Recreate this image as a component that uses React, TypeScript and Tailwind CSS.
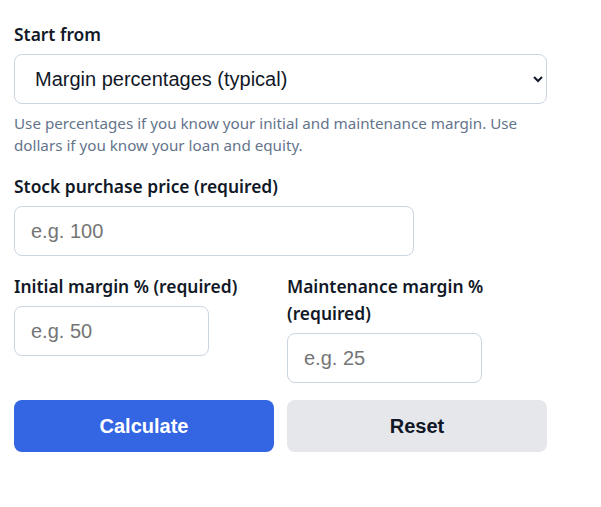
import { useState } from "react";

const labelClass =
  "mb-1.5 block text-[17.4px] font-semibold leading-[27px] text-[#111827]";

const inputClass =
  "h-[50px] rounded-lg border border-[#cbd5e1] bg-white px-4 font-['Liberation_Sans',Arial,sans-serif] text-[20px] text-[#111827] placeholder:text-[#757575] outline-none";

export default function App() {
  const [mode, setMode] = useState("percent");
  const [price, setPrice] = useState("");
  const [initial, setInitial] = useState("");
  const [maintenance, setMaintenance] = useState("");

  const reset = () => {
    setPrice("");
    setInitial("");
    setMaintenance("");
  };

  return (
    <div
      className="min-h-screen bg-white px-[14px] pt-[21px]"
      style={{ fontFamily: '"Noto Sans", "Open Sans", sans-serif' }}
    >
      <div className="w-[533px]">
        {/* START FROM */}
        <div className="mb-[17px]">
          <label className={labelClass}>Start from</label>
          <select
            value={mode}
            onChange={(e) => setMode(e.target.value)}
            className="h-[50px] w-full rounded-lg border border-[#cbd5e1] bg-white pl-4 pr-2 font-['Liberation_Sans',Arial,sans-serif] text-[20px] text-[#111827]"
          >
            <option value="percent">Margin percentages (typical)</option>
            <option value="dollars">Dollar amounts</option>
          </select>
          <p className="mt-2 text-[15.2px] leading-[22px] text-[#64748b]">
            Use percentages if you know your initial and maintenance margin. Use
            dollars if you know your loan and equity.
          </p>
        </div>

        {/* PRICE */}
        <div className="mb-[17px]">
          <label className={labelClass}>Stock purchase price (required)</label>
          <input
            value={price}
            onChange={(e) => setPrice(e.target.value)}
            placeholder="e.g. 100"
            className={`${inputClass} w-[400px]`}
          />
        </div>

        {/* MARGINS */}
        <div className="mb-[17px] grid grid-cols-2 gap-x-[13px]">
          <div>
            <label className={labelClass}>Initial margin % (required)</label>
            <input
              value={initial}
              onChange={(e) => setInitial(e.target.value)}
              placeholder="e.g. 50"
              className={`${inputClass} w-[195px]`}
            />
          </div>
          <div>
            <label className={labelClass}>
              Maintenance margin % (required)
            </label>
            <input
              value={maintenance}
              onChange={(e) => setMaintenance(e.target.value)}
              placeholder="e.g. 25"
              className={`${inputClass} w-[195px]`}
            />
          </div>
        </div>

        {/* BUTTONS */}
        <div className="grid grid-cols-2 gap-x-[13px]">
          <button className="h-[52px] rounded-lg bg-[#3465e3] font-['Liberation_Sans',Arial,sans-serif] text-[20px] font-bold text-white">
            Calculate
          </button>
          <button
            onClick={reset}
            className="h-[52px] rounded-lg bg-[#e5e7eb] font-['Liberation_Sans',Arial,sans-serif] text-[20px] font-bold text-[#111827]"
          >
            Reset
          </button>
        </div>
      </div>
    </div>
  );
}
